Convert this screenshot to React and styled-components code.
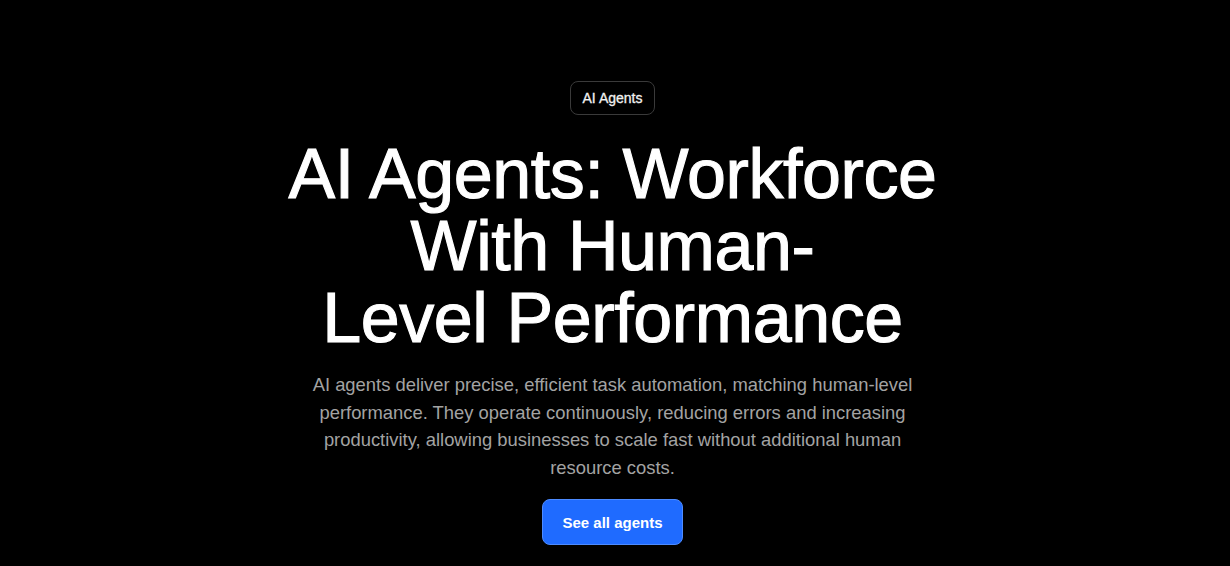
import React from 'react';
import styled, { createGlobalStyle } from 'styled-components';

const GlobalStyle = createGlobalStyle`
    html, body {
        margin: 0;
        padding: 0;
        background-color: #000000;
    }
    * {
        box-sizing: border-box;
    }
`;

const Hero = styled.section`
    display: flex;
    flex-direction: column;
    align-items: center;
    width: 100%;
    height: 566px;
    padding: 81px 5px 0 0;
    overflow: hidden;
    background-color: #000000;
    color: #ffffff;
    text-align: center;
    font-family: 'Liberation Sans', Arial, sans-serif;
`;

const Badge = styled.span`
    display: inline-flex;
    align-items: center;
    justify-content: center;
    height: 34px;
    padding: 0 12px;
    border: 1px solid #3a3a3a;
    border-radius: 8px;
    font-size: 14px;
    color: #f2f2f2;
    -webkit-text-stroke: 0.3px #f2f2f2;
`;

const Title = styled.h1`
    margin: 23px 0 0;
    font-size: 70px;
    font-weight: 400;
    line-height: 72px;
    letter-spacing: -0.4px;
    -webkit-text-stroke: 1.1px #ffffff;
`;

const Lead = styled.p`
    max-width: 620px;
    margin: 17px 0 0;
    font-size: 18.4px;
    line-height: 27.5px;
    color: #a3a3a3;
`;

const Button = styled.a`
    display: inline-flex;
    align-items: center;
    justify-content: center;
    height: 46px;
    margin-top: 18px;
    padding: 0 19px;
    border-radius: 8px;
    border: 1px solid #4d8bff;
    background-color: #1f6bff;
    color: #ffffff;
    font-size: 15px;
    font-weight: 700;
    text-decoration: none;
    cursor: pointer;
`;

const App = () => (
    <>
        <GlobalStyle />
        <Hero>
            <Badge>AI Agents</Badge>
            <Title>
                AI Agents: Workforce
                <br />
                With Human-
                <br />
                Level Performance
            </Title>
            <Lead>
                AI agents deliver precise, efficient task automation, matching human-level
                performance. They operate continuously, reducing errors and increasing
                productivity, allowing businesses to scale fast without additional human
                resource costs.
            </Lead>
            <Button href="#">See all agents</Button>
        </Hero>
    </>
);

export default App;
